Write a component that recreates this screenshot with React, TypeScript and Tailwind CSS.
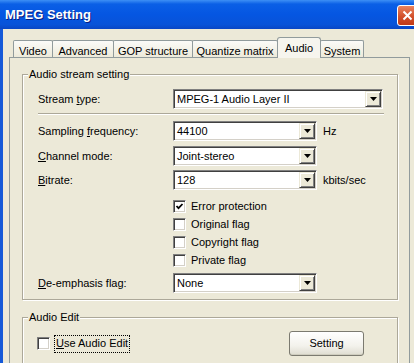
import React from "react";

function DropButton() {
  return (
    <div className="w-[16px] h-full shrink-0 flex items-center justify-center bg-[#ece9d8] border border-t-[#ece9d8] border-l-[#ece9d8] border-b-[#404040] border-r-[#404040] shadow-[inset_1px_1px_0_#fff,inset_-1px_-1px_0_#808080]">
      <svg width="7" height="4" viewBox="0 0 7 4">
        <polygon points="0,0 7,0 3.5,4" fill="#000" />
      </svg>
    </div>
  );
}

function Combo({ value, width }: { value: string; width: string }) {
  return (
    <div
      className={`${width} h-[20px] shrink-0 flex p-[1px] bg-white border border-t-[#808080] border-l-[#808080] border-b-white border-r-white shadow-[inset_1px_1px_0_#404040,inset_-1px_-1px_0_#d4d0c8]`}
    >
      <span className="flex-1 flex items-center pl-[2px]">{value}</span>
      <DropButton />
    </div>
  );
}

function CheckBox({ checked }: { checked?: boolean }) {
  return (
    <div className="w-[13px] h-[13px] shrink-0 flex items-center justify-center bg-white border border-t-[#808080] border-l-[#808080] border-b-white border-r-white shadow-[inset_1px_1px_0_#404040,inset_-1px_-1px_0_#d4d0c8]">
      {checked && (
        <svg width="9" height="9" viewBox="0 0 9 9">
          <polyline points="1.5,4 3.5,6.2 7.5,2" fill="none" stroke="#000" strokeWidth="1.8" />
        </svg>
      )}
    </div>
  );
}

function Row({ label, children }: { label: React.ReactNode; children: React.ReactNode }) {
  return (
    <div className="h-[20px] flex items-center pl-[15px]">
      <span className="w-[135px] shrink-0">{label}</span>
      {children}
    </div>
  );
}

const tabs = [
  { name: "Video", w: "w-[40px]" },
  { name: "Advanced", w: "w-[62px]" },
  { name: "GOP structure", w: "w-[80px]" },
  { name: "Quantize matrix", w: "w-[86px]" },
  { name: "Audio", w: "w-[44px]", active: true },
  { name: "System", w: "w-[44px]" },
];

export default function App() {
  return (
    <div className="w-[414px] h-[363px] overflow-hidden flex flex-col bg-[#ece9d8] text-[11px] leading-[13px] text-black font-['Liberation_Sans',Arial,sans-serif]">
      {/* title bar */}
      <div className="h-[29px] shrink-0 flex items-start justify-between bg-[linear-gradient(to_bottom,#3d8ff5_0%,#0a5fe6_14%,#0556e2_50%,#0853d8_85%,#0a46c4_100%)]">
        <span className="pl-[5px] pt-[7px] text-white font-bold text-[13px] leading-[15px] [text-shadow:1px_1px_0_#0a1d80]">
          MPEG Setting
        </span>
        <div className="mt-[5px] -mr-[4px] w-[21px] h-[21px] shrink-0 flex items-center justify-center rounded-[3px] border border-white bg-[linear-gradient(to_bottom,#e9845f,#d2502b_55%,#c13a18)]">
          <svg width="11" height="11" viewBox="0 0 11 11">
            <path d="M1.5 1.5 L9.5 9.5 M9.5 1.5 L1.5 9.5" stroke="#fff" strokeWidth="2" />
          </svg>
        </div>
      </div>

      <div className="flex-1 flex min-h-0">
        <div className="w-[3px] shrink-0 bg-[#1559d8]" />
        <div className="flex-1 flex flex-col pt-[8px]">
          {/* tabs */}
          <div className="h-[21px] shrink-0 flex items-start ml-[10px]">
            {tabs.map((t, i) =>
              t.active ? (
                <div
                  key={t.name}
                  className={`${t.w} -ml-px h-[21px] relative z-10 flex justify-center pt-[4px] rounded-t-[3px] border border-b-0 border-[#919b9c] bg-[#f6f5ee]`}
                >
                  {t.name}
                </div>
              ) : (
                <div
                  key={t.name}
                  className={`${t.w} ${i === 0 ? "" : "-ml-px"} mt-[3px] h-[18px] flex justify-center pt-[4px] rounded-t-[2px] border border-b-0 border-[#919b9c] bg-[linear-gradient(to_bottom,#fbfbf8,#ece9d8)]`}
                >
                  {t.name}
                </div>
              )
            )}
          </div>

          {/* panel */}
          <div className="-mt-px ml-[6px] w-[401px] h-[320px] shrink-0 border border-[#919b9c] bg-[#ece9d8]">
            {/* Audio stream setting */}
            <div className="mt-[16px] ml-[12px] w-[376px] pb-[6px] border border-[#aca899] shadow-[inset_1px_1px_0_#fff,1px_1px_0_#fff]">
              <div className="-mt-[7px] ml-[5px] w-fit px-[1px] bg-[#ece9d8]">Audio stream setting</div>

              <div className="mt-[8px]">
                <Row label={<>Stream <u>t</u>ype:</>}>
                  <Combo value="MPEG-1 Audio Layer II" width="w-[210px]" />
                </Row>
              </div>

              <div className="mt-[4px] ml-[15px] w-[346px] h-[2px] border-t border-t-[#aca899] border-b border-b-white" />

              <div className="mt-[6px]">
                <Row label={<>Sampling <u>f</u>requency:</>}>
                  <Combo value="44100" width="w-[144px]" />
                  <span className="ml-[6px]">Hz</span>
                </Row>
              </div>
              <div className="mt-[5px]">
                <Row label={<><u>C</u>hannel mode:</>}>
                  <Combo value="Joint-stereo" width="w-[144px]" />
                </Row>
              </div>
              <div className="mt-[4px]">
                <Row label={<><u>B</u>itrate:</>}>
                  <Combo value="128" width="w-[144px]" />
                  <span className="ml-[6px]">kbits/sec</span>
                </Row>
              </div>

              <div className="mt-[7px] pl-[150px] flex flex-col">
                {[
                  ["Error protection", true],
                  ["Original flag", false],
                  ["Copyright flag", false],
                  ["Private flag", false],
                ].map(([name, on]) => (
                  <div key={name as string} className="h-[18px] flex items-center gap-[5px]">
                    <CheckBox checked={on as boolean} />
                    <span>{name as string}</span>
                  </div>
                ))}
              </div>

              <div className="mt-[4px]">
                <Row label={<><u>D</u>e-emphasis flag:</>}>
                  <Combo value="None" width="w-[144px]" />
                </Row>
              </div>
            </div>

            {/* Audio Edit */}
            <div className="mt-[17px] ml-[12px] w-[376px] pb-[12px] border border-[#aca899] shadow-[inset_1px_1px_0_#fff,1px_1px_0_#fff]">
              <div className="-mt-[7px] ml-[5px] w-fit px-[1px] bg-[#ece9d8]">Audio Edit</div>
              <div className="mt-[7px] h-[25px] flex items-center pl-[14px]">
                <CheckBox />
                <span className="ml-[4px] h-[18px] flex items-center px-[1px] border border-dotted border-black">
                  <u>U</u>se Audio Edit
                </span>
                <button className="ml-auto mr-[33px] w-[75px] h-[25px] rounded-[3px] border border-[#7b7a70] bg-[linear-gradient(to_bottom,#ffffff,#f3f2ec_60%,#dedcd0)] shadow-[inset_0_-1px_0_#cfcdbf]">
                  Setting
                </button>
              </div>
            </div>
          </div>
        </div>
      </div>
    </div>
  );
}
